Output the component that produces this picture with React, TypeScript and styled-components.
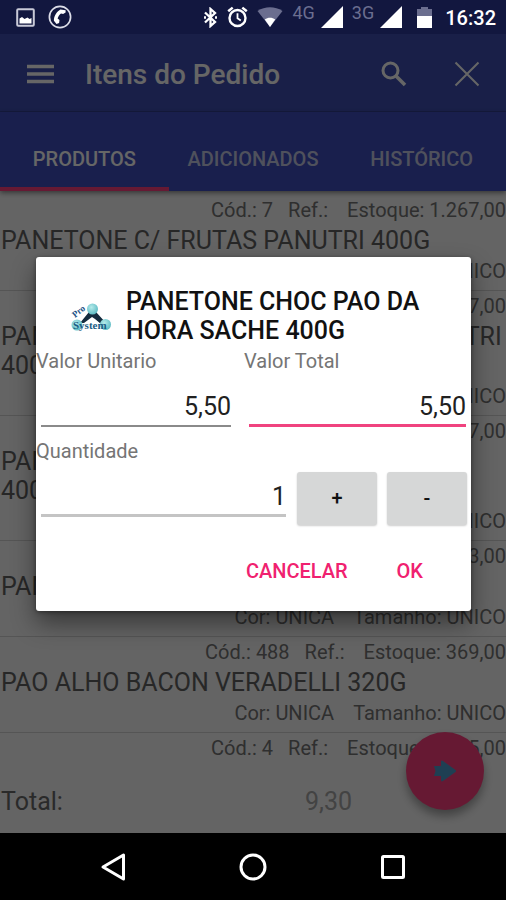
import React from "react";
import styled, { createGlobalStyle } from "styled-components";

const GlobalStyle = createGlobalStyle`
  * { box-sizing: border-box; }
  body { margin: 0; background: #000; font-family: Roboto, "Liberation Sans", sans-serif; }
  button, input { font-family: inherit; margin: 0; }
  h1, h2, p { margin: 0; }
`;

const Screen = styled.div`
  display: flex;
  flex-direction: column;
  height: 100vh;
  min-height: 640px;
  overflow: hidden;
`;

const StatusBar = styled.header`
  display: flex;
  align-items: center;
  justify-content: space-between;
  height: 34px;
  padding: 0 10px 0 16px;
  background: #12173f;
  color: #fff;
`;

const StatusGroup = styled.div<{ $gap: number }>`
  display: flex;
  align-items: center;
  gap: ${(p) => p.$gap}px;
`;

const Signal = styled.span`
  display: flex;
  align-items: center;
  gap: 6px;
`;

const NetworkType = styled.span`
  padding-bottom: 8px;
  font-size: 18px;
  line-height: 18px;
  color: #6b6e8f;
`;

const Battery = styled.span`
  display: flex;
  padding: 0 4px 0 6px;
`;

const Clock = styled.time`
  padding-top: 2px;
  font-size: 20px;
  line-height: 24px;
  font-weight: 500;
`;

const Stage = styled.div`
  position: relative;
  display: flex;
  flex-direction: column;
  flex: 1;
  min-height: 0;
`;

const Page = styled.div`
  display: flex;
  flex-direction: column;
  flex: 1;
  min-height: 0;
  background: #fafafa;
`;

const Toolbar = styled.div`
  display: flex;
  align-items: center;
  height: 78px;
  padding: 2px 23px 0 24px;
  background: #3f4fb3;
  border-bottom: 1px solid #344299;
`;

const IconButton = styled.button`
  display: flex;
  align-items: center;
  justify-content: center;
  width: 32px;
  height: 32px;
  padding: 0;
  border: 0;
  background: none;
  color: #fff;
`;

const ToolbarTitle = styled.h1`
  flex: 1;
  padding: 2px 0 0 29px;
  font-size: 28px;
  line-height: 34px;
  font-weight: 500;
  color: #fff;
`;

const ToolbarActions = styled.div`
  display: flex;
  gap: 41px;
`;

const Tabs = styled.nav`
  display: grid;
  grid-template-columns: repeat(3, 1fr);
  height: 79px;
  background: #3f4fc0;
  box-shadow: 0 2px 5px rgba(0, 0, 0, 0.45);
`;

const Tab = styled.button<{ $active?: boolean }>`
  padding: 18px 0 0;
  border: 0;
  border-bottom: 4px solid ${(p) => (p.$active ? "#ff4081" : "transparent")};
  background: none;
  font-size: 20px;
  line-height: 24px;
  font-weight: 500;
  white-space: nowrap;
  color: ${(p) => (p.$active ? "#fff" : "#c6cae6")};
`;

const ProductList = styled.ul`
  flex: 1;
  min-height: 0;
  margin: 0;
  padding: 4px 0 0;
  overflow: hidden;
  list-style: none;
`;

const ProductRow = styled.li`
  display: flex;
  flex-direction: column;
  gap: 4px;
  padding: 3px 0 7px;
  border-bottom: 1px solid #d4d4d4;
  &:last-child { border-bottom: 0; }
`;

const Meta = styled.p`
  display: flex;
  justify-content: flex-end;
  gap: 19px;
  font-size: 20px;
  line-height: 24px;
  color: #757575;
  white-space: nowrap;
`;

const MetaPair = styled.span`
  display: flex;
  gap: 15px;
`;

const ProductName = styled.h2`
  padding-left: 1px;
  font-size: 25px;
  line-height: 29px;
  font-weight: 400;
  color: #636363;
`;

const Footer = styled.footer`
  display: flex;
  align-items: center;
  height: 66px;
  padding: 4px 154px 0 1px;
  justify-content: space-between;
  font-size: 25px;
  line-height: 30px;
  color: #6a6a6a;
`;

const FooterTotal = styled.output`
  color: #a8a8a8;
`;

const Fab = styled.button`
  position: absolute;
  right: 22px;
  bottom: 23px;
  display: flex;
  align-items: center;
  justify-content: center;
  width: 78px;
  height: 78px;
  padding: 0;
  border: 0;
  border-radius: 50%;
  background: #ff4081;
  box-shadow: 0 6px 10px rgba(0, 0, 0, 0.35);
`;

const Scrim = styled.div`
  position: absolute;
  inset: 0;
  display: flex;
  align-items: center;
  justify-content: center;
  padding: 0 35px 0 36px;
  background: rgba(0, 0, 0, 0.6);
`;

const Dialog = styled.form`
  width: 100%;
  max-width: 560px;
  padding-bottom: 16px;
  border-radius: 3px;
  background: #fff;
  box-shadow: 0 12px 24px rgba(0, 0, 0, 0.45), 0 1px 4px rgba(0, 0, 0, 0.4);
`;

const DialogHeader = styled.div`
  display: flex;
  align-items: center;
  gap: 13px;
  padding: 30px 34px 4px;
`;

const DialogTitle = styled.h2`
  flex: 1;
  padding-left: 1px;
  font-size: 25px;
  line-height: 29px;
  font-weight: 500;
  color: #111;
`;

const PriceRow = styled.div`
  display: grid;
  grid-template-columns: 200fr 227fr;
  gap: 8px;
`;

const Field = styled.div`
  display: flex;
  flex-direction: column;
  min-width: 0;
`;

const FieldLabel = styled.label`
  display: block;
  font-size: 20px;
  line-height: 24px;
  color: #757575;
`;

const TextInput = styled.input<{ $tone: "plain" | "focused" | "soft" }>`
  width: auto;
  min-width: 0;
  height: 41px;
  margin: 13px 5px 0;
  padding: ${(p) => (p.$tone === "plain" ? "3px" : "4px")} 0 0;
  border: 0;
  border-bottom: ${(p) =>
    p.$tone === "plain" ? "2px solid #8a8a8a" : p.$tone === "focused" ? "3px solid #f0437f" : "3px solid #c4c4c4"};
  border-radius: 0;
  outline: 0;
  background: none;
  font-size: 25px;
  line-height: 30px;
  text-align: right;
  color: #212121;
`;

const QuantityBlock = styled.div`
  padding-top: 12px;
`;

const QuantityRow = styled.div`
  display: flex;
  align-items: flex-end;
  gap: 10px;
  padding-right: 4px;
`;

const QuantityInput = styled(TextInput)`
  flex: 1;
  margin: 13px 1px 8px 5px;
`;

const StepButton = styled.button`
  width: 80px;
  height: 53px;
  padding: 0;
  border: 0;
  border-radius: 3px;
  background: #d6d7d7;
  box-shadow: 0 1px 2px rgba(0, 0, 0, 0.2);
  font-size: 20px;
  line-height: 24px;
  font-weight: 500;
  color: #111;
`;

const DialogActions = styled.div`
  display: flex;
  justify-content: flex-end;
  gap: 25px;
  padding: 22px 36px 0;
`;

const TextButton = styled.button`
  height: 48px;
  padding: 0 12px;
  border: 0;
  background: none;
  font-size: 20px;
  line-height: 24px;
  font-weight: 500;
  color: #f0216f;
`;

const NavBar = styled.nav`
  display: flex;
  align-items: center;
  justify-content: center;
  gap: 108px;
  height: 67px;
  background: #000;
`;

const PhotoIcon = () => (
  <svg width="19" height="19" viewBox="0 0 19 19" aria-hidden="true">
    <rect x="1.2" y="1.2" width="16.6" height="16.6" rx="1" fill="none" stroke="#c9cad8" strokeWidth="2" />
    <path d="M3.5 15.5v-5l2.500-1.500 2.500 2 3-1.500 2 1.500 2-1v5.500z" fill="#fff" />
  </svg>
);

const CallIcon = () => (
  <svg width="24" height="24" viewBox="0 0 24 24" aria-hidden="true">
    <circle cx="12" cy="12" r="10.6" fill="none" stroke="#dcdde8" strokeWidth="1.7" />
    <path d="M17.6 5.2 12.4 4.6C8.6 6.8 5.8 11 5.9 15.8l2.6 3.2 2.6-1.1.4-3-1.9-1.3c.5-2.2 1.7-4 3.4-5.2l2.1.7 2.5-1.5z" fill="#fff" />
  </svg>
);

const BluetoothIcon = () => (
  <svg width="15" height="21" viewBox="0 0 15 21" fill="none" stroke="#fff" strokeWidth="2.3" aria-hidden="true">
    <path d="M2 5.500 12 15l-4.500 4V2L12 6 2 15.500" />
    <path d="M1 10.500h2M12 10.500h2" />
  </svg>
);

const AlarmIcon = () => (
  <svg width="21" height="22" viewBox="0 0 21 22" fill="none" stroke="#fff" aria-hidden="true">
    <circle cx="10.5" cy="12" r="8" strokeWidth="2.4" />
    <path d="M10.5 7.3v5l3.3 2.2" strokeWidth="1.8" />
    <path d="M1.2 5.3 5.7 1.6M19.8 5.3 15.3 1.6" strokeWidth="2.5" />
  </svg>
);

const WifiIcon = () => (
  <svg width="26" height="20" viewBox="0 0 26 20" aria-hidden="true">
    <path d="M0.5 4C8-1 18-1 25.500 4L13 20z" fill="#6b6e8f" />
    <path d="M7.800 12.500c3-2.400 7.400-2.400 10.400 0L13 20z" fill="#fff" />
  </svg>
);

const SignalIcon = () => (
  <svg width="22" height="22" viewBox="0 0 22 22" aria-hidden="true">
    <path d="M22 0v22H0z" fill="#fff" />
  </svg>
);

const BatteryIcon = () => (
  <svg width="15" height="21" viewBox="0 0 15 21" aria-hidden="true">
    <path d="M4 0h7v2h4v8H0V2h4z" fill="#6b6e8f" />
    <path d="M0 9h15v12H0z" fill="#fff" />
  </svg>
);

const MenuIcon = () => (
  <svg width="27" height="20" viewBox="0 0 27 20" aria-hidden="true">
    <path d="M0 2.500h27M0 10h27M0 17.500h27" stroke="currentColor" strokeWidth="3.400" />
  </svg>
);

const SearchIcon = () => (
  <svg width="26" height="26" viewBox="0 0 26 26" fill="none" stroke="currentColor" aria-hidden="true">
    <circle cx="9.500" cy="9.500" r="7.500" strokeWidth="3" />
    <path d="m15 15 9 9" strokeWidth="3.600" />
  </svg>
);

const CloseIcon = () => (
  <svg width="26" height="26" viewBox="0 0 26 26" fill="none" stroke="currentColor" aria-hidden="true">
    <path d="m1.500 1.500 23 23m0-23-23 23" strokeWidth="2" />
  </svg>
);

const ArrowIcon = () => (
  <svg width="24" height="22" viewBox="0 0 24 22" aria-hidden="true">
    <path d="M1 6h7V1.500Q8.500 0 10 1l12.500 9q1 1 0 2L10 21q-1.500 1-2-.500V16H1l1.500-5z" fill="#4f9fd0" />
  </svg>
);

const BrandLogo = () => (
  <svg width="42" height="40" viewBox="0 0 42 40" role="img" aria-label="Pro System">
    <defs>
      <radialGradient id="orb" cx="0.4" cy="0.35" r="0.7">
        <stop offset="0" stopColor="#b5ebea" />
        <stop offset="1" stopColor="#58b8c2" />
      </radialGradient>
    </defs>
    <path d="M10 27 19 16h7l10 11-5 1-6-5-3-2-4 3-4 3z" fill="#152c3f" />
    <circle cx="22.500" cy="13" r="5.500" fill="url(#orb)" />
    <circle cx="7" cy="29" r="5.500" fill="url(#orb)" />
    <circle cx="35.500" cy="28.500" r="5.500" fill="url(#orb)" />
    <text x="5" y="22" transform="rotate(-38 5 22)" fontFamily="Liberation Serif, serif" fontSize="9" fontWeight="700" fill="#1d5286">Pro</text>
    <text x="3" y="33" fontFamily="Liberation Serif, serif" fontSize="11" fontWeight="700" fill="#1b5c84">System</text>
  </svg>
);

const BackIcon = () => (
  <svg width="28" height="30" viewBox="0 0 28 30" aria-hidden="true">
    <path d="M24.500 3v24L4 15z" fill="none" stroke="#fff" strokeWidth="3" strokeLinejoin="round" />
  </svg>
);

const HomeIcon = () => (
  <svg width="28" height="28" viewBox="0 0 28 28" aria-hidden="true">
    <circle cx="14" cy="14" r="12" fill="none" stroke="#fff" strokeWidth="3" />
  </svg>
);

const RecentIcon = () => (
  <svg width="26" height="26" viewBox="0 0 26 26" aria-hidden="true">
    <rect x="2.500" y="2.500" width="21" height="21" rx="1" fill="none" stroke="#fff" strokeWidth="3" />
  </svg>
);

type Product = { code: string; stock: string; name?: string };

const products: Product[] = [
  { code: "7", stock: "1.267,00", name: "PANETONE C/ FRUTAS PANUTRI 400G" },
  { code: "8", stock: "1.147,00", name: "PANETONE C/ GOTAS CHOCOLATE PANUTRI 400G" },
  { code: "5", stock: "407,00", name: "PANETONE CHOC PAO DA HORA SACHE 400G" },
  { code: "6", stock: "213,00", name: "PANETONE FRUTAS SACHE 400G" },
  { code: "488", stock: "369,00", name: "PAO ALHO BACON VERADELLI 320G" },
  { code: "4", stock: "1.265,00" },
];

export default function App() {
  return (
    <>
      <GlobalStyle />
      <Screen>
        <StatusBar>
          <StatusGroup $gap={13}>
            <PhotoIcon />
            <CallIcon />
          </StatusGroup>
          <StatusGroup $gap={9}>
            <BluetoothIcon />
            <AlarmIcon />
            <WifiIcon />
            <Signal>
              <NetworkType>4G</NetworkType>
              <SignalIcon />
            </Signal>
            <Signal>
              <NetworkType>3G</NetworkType>
              <SignalIcon />
            </Signal>
            <Battery>
              <BatteryIcon />
            </Battery>
            <Clock>16:32</Clock>
          </StatusGroup>
        </StatusBar>

        <Stage>
          <Page>
            <Toolbar>
              <IconButton type="button" aria-label="Menu"><MenuIcon /></IconButton>
              <ToolbarTitle>Itens do Pedido</ToolbarTitle>
              <ToolbarActions>
                <IconButton type="button" aria-label="Buscar"><SearchIcon /></IconButton>
                <IconButton type="button" aria-label="Fechar"><CloseIcon /></IconButton>
              </ToolbarActions>
            </Toolbar>
            <Tabs>
              <Tab type="button" $active>PRODUTOS</Tab>
              <Tab type="button">ADICIONADOS</Tab>
              <Tab type="button">HISTÓRICO</Tab>
            </Tabs>
            <ProductList>
              {products.map((p) => (
                <ProductRow key={p.code}>
                  <Meta>
                    <MetaPair>
                      <span>Cód.: {p.code}</span>
                      <span>Ref.:</span>
                    </MetaPair>
                    <span>Estoque: {p.stock}</span>
                  </Meta>
                  {p.name && (
                    <>
                      <ProductName>{p.name}</ProductName>
                      <Meta>
                        <span>Cor: UNICA</span>
                        <span>Tamanho: UNICO</span>
                      </Meta>
                    </>
                  )}
                </ProductRow>
              ))}
            </ProductList>
            <Footer>
              <span>Total:</span>
              <FooterTotal>9,30</FooterTotal>
            </Footer>
            <Fab type="button" aria-label="Avançar"><ArrowIcon /></Fab>
          </Page>

          <Scrim>
            <Dialog role="dialog" aria-modal="true" aria-labelledby="dialog-title" onSubmit={(e) => e.preventDefault()}>
              <DialogHeader>
                <BrandLogo />
                <DialogTitle id="dialog-title">PANETONE CHOC PAO DA HORA SACHE 400G</DialogTitle>
              </DialogHeader>
              <PriceRow>
                <Field>
                  <FieldLabel htmlFor="unit">Valor Unitario</FieldLabel>
                  <TextInput id="unit" $tone="plain" defaultValue="5,50" />
                </Field>
                <Field>
                  <FieldLabel htmlFor="total">Valor Total</FieldLabel>
                  <TextInput id="total" $tone="focused" defaultValue="5,50" />
                </Field>
              </PriceRow>
              <QuantityBlock>
                <FieldLabel htmlFor="quantity">Quantidade</FieldLabel>
                <QuantityRow>
                  <QuantityInput id="quantity" $tone="soft" defaultValue="1" />
                  <StepButton type="button">+</StepButton>
                  <StepButton type="button">-</StepButton>
                </QuantityRow>
              </QuantityBlock>
              <DialogActions>
                <TextButton type="button">CANCELAR</TextButton>
                <TextButton type="submit">OK</TextButton>
              </DialogActions>
            </Dialog>
          </Scrim>
        </Stage>

        <NavBar>
          <IconButton type="button" aria-label="Voltar"><BackIcon /></IconButton>
          <IconButton type="button" aria-label="Início"><HomeIcon /></IconButton>
          <IconButton type="button" aria-label="Recentes"><RecentIcon /></IconButton>
        </NavBar>
      </Screen>
    </>
  );
}
